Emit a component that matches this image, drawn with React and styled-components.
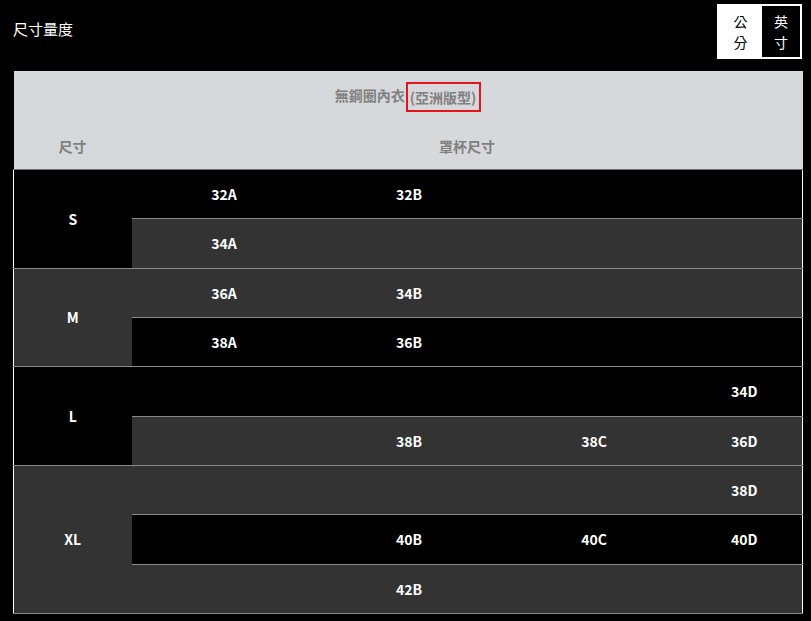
import React from 'react';
import styled, { createGlobalStyle } from 'styled-components';

const GlobalStyle = createGlobalStyle`
  body {
    margin: 0;
    background: #000;
    font-family: "Noto Sans CJK TC", "Noto Sans", sans-serif;
  }
`;

// 사이즈 그룹별 컵 사이즈 (빈 칸은 '')
const groups = [
  { size: 'S', rows: [['32A', '32B', '', ''], ['34A', '', '', '']] },
  { size: 'M', rows: [['36A', '34B', '', ''], ['38A', '36B', '', '']] },
  { size: 'L', rows: [['', '', '', '34D'], ['', '38B', '38C', '36D']] },
  { size: 'XL', rows: [['', '', '', '38D'], ['', '40B', '40C', '40D'], ['', '42B', '', '']] },
];

function App() {
  return (
    <Page>
      <GlobalStyle />
      <TopBar>
        <Title>尺寸量度</Title>
        <UnitToggle>
          <UnitButton $active>公<br />分</UnitButton>
          <UnitButton>英<br />寸</UnitButton>
        </UnitToggle>
      </TopBar>

      <SizeTable>
        <colgroup>
          <col style={{ width: 118 }} />
          <col style={{ width: 185 }} />
          <col style={{ width: 185 }} />
          <col style={{ width: 185 }} />
          <col />
        </colgroup>
        <thead>
          <tr>
            <HeadTitle colSpan={5}>
              無鋼圈內衣<Marked>(亞洲版型)</Marked>
            </HeadTitle>
          </tr>
          <tr>
            <HeadCell>尺寸</HeadCell>
            <HeadCell colSpan={4}>罩杯尺寸</HeadCell>
          </tr>
        </thead>
        <tbody>
          {groups.map((g, gi) =>
            g.rows.map((row, ri) => {
              const dark = (gi + ri) % 2 === 0;
              return (
                <tr key={g.size + ri}>
                  {ri === 0 && (
                    <SizeCell rowSpan={g.rows.length} $dark={gi % 2 === 0}>
                      {g.size}
                    </SizeCell>
                  )}
                  {row.map((v, ci) => (
                    <CupCell key={ci} $dark={dark} $last={ci === 3}>
                      {v}
                    </CupCell>
                  ))}
                </tr>
              );
            })
          )}
        </tbody>
      </SizeTable>
    </Page>
  );
}

export default App;

const Page = styled.div`
  width: 811px;
  min-height: 621px;
  background: #000;
`;

const TopBar = styled.div`
  height: 71px;
  display: flex;
  align-items: flex-start;
  justify-content: space-between;
  padding: 0 9px 0 13px;
  box-sizing: border-box;
`;

const Title = styled.div`
  color: #fff;
  font-size: 15px;
  line-height: 20px;
  margin-top: 19px;
`;

const UnitToggle = styled.div`
  margin-top: 4px;
  display: flex;
  border: 2px solid #fff;
  height: 51px;
`;

const UnitButton = styled.div`
  width: ${p => (p.$active ? '43px' : '38px')};
  display: flex;
  align-items: center;
  justify-content: center;
  text-align: center;
  font-size: 14px;
  line-height: 21px;
  background: ${p => (p.$active ? '#fff' : '#000')};
  color: ${p => (p.$active ? '#000' : '#fff')};
`;

const SizeTable = styled.table`
  margin-left: 13px;
  width: 790px;
  table-layout: fixed;
  border-collapse: collapse;
  border-spacing: 0;
`;

const HeadTitle = styled.th`
  height: 51px;
  padding: 0;
  background: #d7d8db;
  color: #808080;
  font-size: 14px;
  font-weight: bold;
  text-align: center;
  vertical-align: middle;
`;

const Marked = styled.span`
  display: inline-block;
  border: 2px solid #e3151a;
  line-height: 26px;
  padding: 0 3px 0 2px;
  margin-left: 1px;
  vertical-align: middle;
`;

const HeadCell = styled.th`
  height: 47px;
  padding: 0;
  background: #d7d8db;
  color: #808080;
  font-size: 14px;
  font-weight: bold;
  text-align: center;
  vertical-align: middle;
  border-bottom: 1px solid #6e6e6e;
`;

const SizeCell = styled.td`
  background: ${p => (p.$dark ? '#000' : '#333')};
  color: #fff;
  font-size: 14px;
  font-weight: bold;
  text-align: center;
  vertical-align: middle;
  padding: 0;
  border-left: 1px solid #fff;
  border-top: 1px solid #777;
  border-bottom: 1px solid #8a8a8a;
`;

const CupCell = styled.td`
  height: 48.33px;
  padding: 0;
  background: ${p => (p.$dark ? '#000' : '#333')};
  color: #fff;
  font-size: 14px;
  font-weight: bold;
  text-align: center;
  vertical-align: middle;
  border-top: 1px solid #777;
  border-bottom: 1px solid #8a8a8a;
  border-right: ${p => (p.$last ? '1px solid #fff' : 'none')};
`;
